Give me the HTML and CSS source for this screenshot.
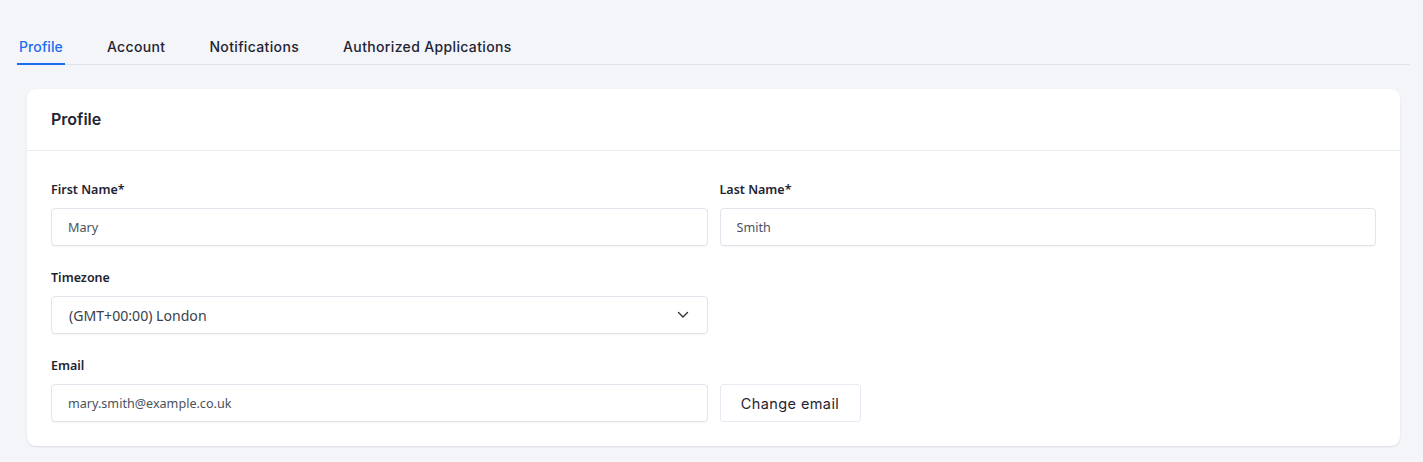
FILE: index.html
```html
<!DOCTYPE html>
<html lang="en">
<head>
  <meta charset="UTF-8">
  <title>Settings - Profile</title>
  <link rel="stylesheet" href="styles.css">
</head>
<body>
  <div class="page">
    <nav class="tabs">
      <a class="tab active" href="#">Profile</a>
      <a class="tab" href="#">Account</a>
      <a class="tab" href="#">Notifications</a>
      <a class="tab" href="#">Authorized Applications</a>
    </nav>

    <section class="card">
      <div class="card-head">
        <h2>Profile</h2>
      </div>
      <form class="card-body">
        <div class="row">
          <div class="field">
            <label for="firstName">First Name*</label>
            <input class="input" type="text" id="firstName" value="Mary">
          </div>
          <div class="field">
            <label for="lastName">Last Name*</label>
            <input class="input" type="text" id="lastName" value="Smith">
          </div>
        </div>
        <div class="row">
          <div class="field">
            <label for="tz">Timezone</label>
            <div class="select">
              <span>(GMT+00:00) London</span>
              <svg width="12" height="8" viewBox="0 0 12 8"><path d="M1.5 1.5 6 6l4.5-4.5" fill="none" stroke="#333" stroke-width="1.4" stroke-linecap="round" stroke-linejoin="round"/></svg>
            </div>
          </div>
          <div class="field"></div>
        </div>
        <div class="row">
          <div class="field">
            <label for="email">Email</label>
            <input class="input" type="text" id="email" value="mary.smith@example.co.uk">
          </div>
          <div class="field bottom">
            <button type="button" class="btn">Change email</button>
          </div>
        </div>
      </form>
    </section>
  </div>
</body>
</html>
```

FILE: styles.css
```css
body {
  margin: 0;
  background: #f4f5f9;
  font-family: "Noto Sans", Arial, sans-serif;
  color: #1f2433;
}

.page {
  padding: 30px 13px 16px 17px;
}

.tabs {
  display: flex;
  gap: 40px;
  border-bottom: 1px solid #dfe3ea;
}

.tab {
  padding: 8px 2px 8px;
  font-family: Inter, sans-serif;
  font-size: 14px;
  font-weight: 500;
  letter-spacing: 0.35px;
  color: #1f2433;
  text-decoration: none;
  border-bottom: 2px solid transparent;
  margin-bottom: -1px;
}

.tab.active {
  color: #1a6cf0;
  border-bottom-color: #1a6cf0;
  letter-spacing: 0.1px;
}

.card {
  margin: 24px 10px 0 10px;
  background: #fff;
  border-radius: 9px;
  box-shadow: 0 1px 2px rgba(30, 40, 70, 0.12);
}

.card-head {
  padding: 18px 24px 19px;
  border-bottom: 1px solid #e8ebf0;
}

.card-head h2 {
  margin: 0;
  font-family: Inter, sans-serif;
  font-size: 16px;
  font-weight: 600;
  line-height: 24px;
}

.card-body {
  padding: 31px 24px 24px;
  display: flex;
  flex-direction: column;
  gap: 24px;
}

.row {
  display: grid;
  grid-template-columns: 1fr 1fr;
  gap: 12px;
}

.field {
  display: flex;
  flex-direction: column;
  gap: 10px;
}

.field.bottom {
  justify-content: flex-end;
}

label {
  font-size: 12.5px;
  font-weight: 600;
  line-height: 16px;
}

.input {
  box-sizing: border-box;
  height: 38px;
  padding: 0 16px;
  border: 1px solid #e1e4ea;
  border-radius: 4px;
  font-family: "Noto Sans", Arial, sans-serif;
  font-size: 12.6px;
  color: #4a5160;
  box-shadow: 0 1px 1px rgba(0, 0, 0, 0.04);
}

.select {
  box-sizing: border-box;
  height: 38px;
  padding: 0 18px 0 17px;
  border: 1px solid #e1e4ea;
  border-radius: 4px;
  display: flex;
  align-items: center;
  justify-content: space-between;
  font-size: 14.1px;
  color: #3a3f4b;
  box-shadow: 0 1px 1px rgba(0, 0, 0, 0.04);
}

.btn {
  align-self: flex-start;
  height: 38px;
  width: 141px;
  background: #fff;
  border: 1px solid #e6ebf3;
  border-radius: 3px;
  font-family: Inter, sans-serif;
  font-size: 14.5px;
  letter-spacing: 0.4px;
  color: #1f2433;
}
```
